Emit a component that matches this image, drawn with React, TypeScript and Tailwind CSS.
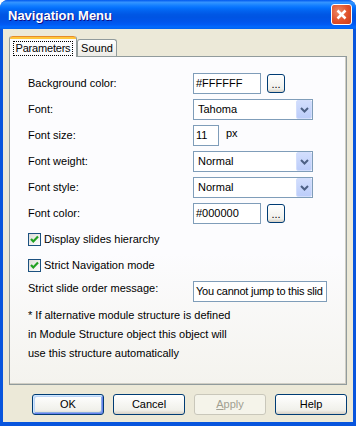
import clsx from 'clsx'
import type { ReactNode } from 'react'

// Campo de texto estilo Windows XP
function TextBox({ value, width }: { value: string; width: string }) {
  return (
    <div
      className={clsx(
        'flex h-[21px] items-center overflow-hidden whitespace-nowrap border border-[#7f9db9] bg-white pl-[2px]',
        width
      )}
    >
      {value}
    </div>
  )
}

// Botón pequeño "..." al lado de los colores
function DotsButton() {
  return (
    <div className="ml-[6px] flex h-[19px] w-[18px] items-center justify-center rounded-[3px] border border-[#003c74] bg-[linear-gradient(to_bottom,#ffffff,#f0f0ea_80%,#d6d0c5)] pt-[2px] text-[11px] leading-none">
      ...
    </div>
  )
}

// Combo desplegable con la flecha azul
function Select({ value }: { value: string }) {
  return (
    <div className="flex h-[21px] w-[120px] border border-[#7f9db9] bg-white">
      <div className="flex flex-1 items-center pl-[4px]">{value}</div>
      <div className="flex w-[16px] items-center justify-center rounded-[2px] border border-[#d3defc] bg-[linear-gradient(to_bottom,#d2defd,#bccdfa)]">
        <svg width="9" height="6" viewBox="0 0 9 6">
          <polyline points="1,1 4.5,4.5 8,1" fill="none" stroke="#4d6185" strokeWidth="2" />
        </svg>
      </div>
    </div>
  )
}

function CheckBox({ label }: { label: string }) {
  return (
    <div className="flex h-[21px] items-center">
      <div className="flex h-[13px] w-[13px] items-center justify-center border border-[#1c5180] bg-[linear-gradient(135deg,#dcdcd7,#ffffff)]">
        <svg width="11" height="11" viewBox="0 0 11 11">
          <polyline points="2,5 4.3,7.5 9,2.5" fill="none" stroke="#21a121" strokeWidth="2.2" />
        </svg>
      </div>
      <span className="ml-[3px]">{label}</span>
    </div>
  )
}

function Row({ label, children, labelClass }: { label: string; children: ReactNode; labelClass?: string }) {
  return (
    <div className="flex h-[21px] items-center">
      <div className={clsx('w-[165px]', labelClass)}>{label}</div>
      {children}
    </div>
  )
}

function Button({ children, focused, disabled }: { children: ReactNode; focused?: boolean; disabled?: boolean }) {
  return (
    <div
      className={clsx(
        'flex h-[21px] w-[72px] items-center justify-center rounded-[3px] border',
        disabled
          ? 'border-[#c9c7ba] bg-[#f5f4ea] text-[#a19f91]'
          : 'border-[#003c74] bg-[linear-gradient(to_bottom,#ffffff,#f0f0ea_80%,#d6d0c5)] text-black',
        focused &&
          'shadow-[inset_1px_1px_0_#cee7ff,inset_-1px_-1px_0_#6982ee,inset_2px_2px_0_#bcd4f6,inset_-2px_-2px_0_#89ade4]'
      )}
    >
      {children}
    </div>
  )
}

export default function App() {
  return (
    <div className="flex h-[426px] w-[356px] flex-col overflow-hidden rounded-t-[8px] bg-[#0855dd] font-['Liberation_Sans',Arial,sans-serif] text-[11px] text-black">
      {/* Barra de título */}
      <div className="flex h-[29px] shrink-0 items-center justify-between bg-[linear-gradient(to_bottom,#0058ee_0%,#3593ff_8%,#288eff_12%,#127dff_20%,#036ffc_28%,#0262ee_38%,#0057e5_50%,#0054e3_60%,#0055eb_75%,#005bf5_85%,#026afe_93%,#0062ef_100%)] pl-[8px] pr-[4px]">
        <span className="pt-[3px] text-[13px] font-bold text-white [text-shadow:1px_1px_#0f1089]">
          Navigation Menu
        </span>
        <div className="flex h-[21px] w-[21px] items-center justify-center rounded-[3px] border border-white bg-[radial-gradient(circle_at_35%_35%,#ee8a66,#e0502a_55%,#c93c1a)]">
          <svg width="11" height="11" viewBox="0 0 11 11">
            <line x1="1.5" y1="1.5" x2="9.5" y2="9.5" stroke="white" strokeWidth="2.5" />
            <line x1="9.5" y1="1.5" x2="1.5" y2="9.5" stroke="white" strokeWidth="2.5" />
          </svg>
        </div>
      </div>

      {/* Cuerpo del diálogo */}
      <div className="mx-[3px] mb-[4px] flex flex-1 flex-col bg-[#ece9d8] px-[6px] pt-[7px]">
        {/* Pestañas */}
        <div className="flex h-[20px] items-end">
          <div className="relative z-10 -mb-[1px] flex h-[21px] w-[68px] flex-col rounded-t-[3px] border-x border-[#919b9c] bg-[#fcfcfe]">
            <div className="h-[3px] rounded-t-[3px] border-t border-[#e68b2c] bg-[#ffc73c]" />
            <div className="flex flex-1 items-center justify-center">
              <span className="border border-dotted border-black px-[2px] leading-[13px] tracking-[-0.2px]">Parameters</span>
            </div>
          </div>
          <div className="flex h-[17px] w-[40px] items-center justify-center rounded-t-[3px] border-x border-t border-[#919b9c] bg-[linear-gradient(to_bottom,#ffffff,#ecebe6)]">
            Sound
          </div>
        </div>

        {/* Panel de la pestaña */}
        <div className="flex h-[329px] flex-col gap-[5px] border border-[#919b9c] bg-[linear-gradient(to_bottom,#fcfcfe_0%,#fcfcfe_60%,#f4f3ee_100%)] pl-[18px] pt-[16px] shadow-[inset_-1px_-1px_0_#d0cec4]">
          <Row label="Background color:">
            <TextBox value="#FFFFFF" width="w-[68px]" />
            <DotsButton />
          </Row>
          <Row label="Font:">
            <Select value="Tahoma" />
          </Row>
          <Row label="Font size:">
            <TextBox value="11" width="w-[26px]" />
            <span className="ml-[7px] pb-[4px]">px</span>
          </Row>
          <Row label="Font weight:">
            <Select value="Normal" />
          </Row>
          <Row label="Font style:">
            <Select value="Normal" />
          </Row>
          <Row label="Font color:">
            <TextBox value="#000000" width="w-[68px]" />
            <DotsButton />
          </Row>
          <CheckBox label="Display slides hierarchy" />
          <CheckBox label="Strict Navigation mode" />
          <Row label="Strict slide order message:" labelClass="pb-[6px]">
            <TextBox value="You cannot jump to this slid" width="w-[134px] tracking-[-0.25px]" />
          </Row>
          <div className="-mt-[1px] leading-[19px]">
            <div>* If alternative module structure is defined</div>
            <div>in Module Structure object this object will</div>
            <div>use this structure automatically</div>
          </div>
        </div>

        {/* Botones */}
        <div className="mt-[9px] flex justify-end gap-[9px]">
          <Button focused>OK</Button>
          <Button>Cancel</Button>
          <Button disabled>
            <span className="underline">A</span>pply
          </Button>
          <Button>Help</Button>
        </div>
      </div>
    </div>
  )
}
